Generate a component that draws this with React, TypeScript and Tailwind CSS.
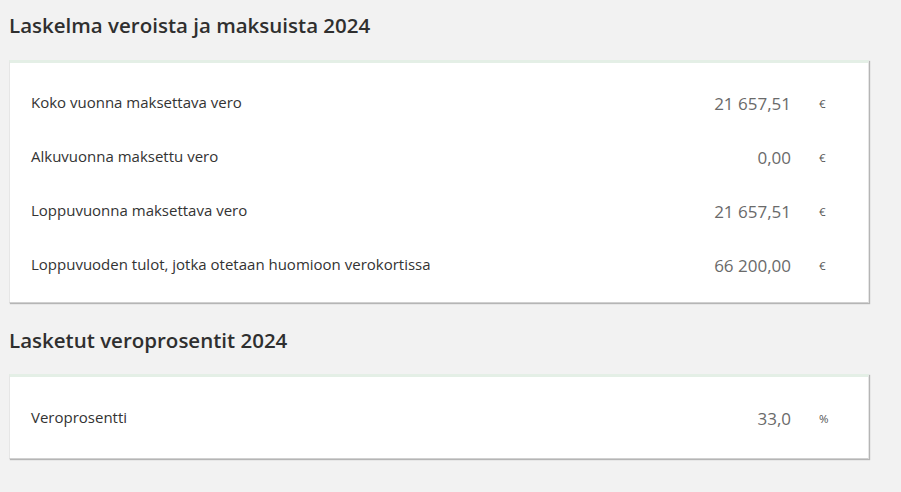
import React from "react";

const rows1 = [
  { label: "Koko vuonna maksettava vero", value: "21 657,51", unit: "€" },
  { label: "Alkuvuonna maksettu vero", value: "0,00", unit: "€" },
  { label: "Loppuvuonna maksettava vero", value: "21 657,51", unit: "€" },
  { label: "Loppuvuoden tulot, jotka otetaan huomioon verokortissa", value: "66 200,00", unit: "€" },
];

function Row({ label, value, unit }: { label: string; value: string; unit: string }) {
  return (
    <div className="flex items-center h-[54px] pl-[21px]">
      <div className="flex-1 text-[15px] text-[#333] leading-none">{label}</div>
      <div className="w-[200px] text-right text-[17px] text-[#6a6a6a] leading-none pt-[3px]">{value}</div>
      <div className="w-[77px] pl-[28px] text-[11.5px] text-[#555] leading-none pt-[4px]">{unit}</div>
    </div>
  );
}

export default function App() {
  return (
    <div
      className="w-[901px] h-[492px] bg-[#f2f2f2] overflow-hidden"
      style={{ fontFamily: '"Open Sans", "Noto Sans", sans-serif' }}
    >
      <div className="pl-[9px] pr-[32px] pt-[11px]">
        <h1 className="text-[20.5px] font-semibold text-[#2f2f2f] leading-[28px]">
          Laskelma veroista ja maksuista 2024
        </h1>
        <div className="mt-[21px] bg-white border-t-[3px] border-t-[#e4efe6] shadow-[1px_1px_1px_rgba(0,0,0,0.25)] border-x border-b border-x-[#e6e6e6] border-b-[#d0d0d0] pt-[12px] pb-[11px]">
          {rows1.map((r) => (
            <Row key={r.label} {...r} />
          ))}
        </div>
        <h2 className="mt-[23px] text-[20.5px] font-semibold text-[#2f2f2f] leading-[28px]">
          Lasketut veroprosentit 2024
        </h2>
        <div className="mt-[20px] bg-white border-t-[3px] border-t-[#e4efe6] shadow-[1px_1px_1px_rgba(0,0,0,0.25)] border-x border-b border-x-[#e6e6e6] border-b-[#d0d0d0] pt-[13px] pb-[14px]">
          <Row label="Veroprosentti" value="33,0" unit="%" />
        </div>
      </div>
    </div>
  );
}
